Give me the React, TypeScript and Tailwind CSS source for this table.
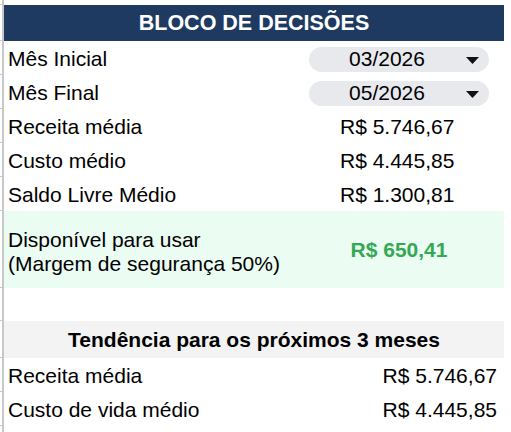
import React from "react";

type Linha = { rotulo: string; valor: string };

const resumo: Linha[] = [
  { rotulo: "Receita média", valor: "R$ 5.746,67" },
  { rotulo: "Custo médio", valor: "R$ 4.445,85" },
  { rotulo: "Saldo Livre Médio", valor: "R$ 1.300,81" },
];

const tendencia: Linha[] = [
  { rotulo: "Receita média", valor: "R$ 5.746,67" },
  { rotulo: "Custo de vida médio", valor: "R$ 4.445,85" },
];

// pequena "régua" de planilha do lado esquerdo
function Linha({ h, children, className = "" }: { h: string; children?: React.ReactNode; className?: string }) {
  return (
    <div className={`flex ${h}`}>
      <div className="w-[2px] border-b border-[#c8c8c8]" />
      <div className="w-[2px] bg-[#c8c8c8]" />
      <div className={`w-[500px] flex items-center ${className}`}>{children}</div>
    </div>
  );
}

function Seletor({ valor }: { valor: string }) {
  return (
    <div className="ml-auto mr-[15px] w-[180px] h-[25px] rounded-full bg-[#e8e9ed] flex items-center relative">
      <span className="w-full text-center pr-[24px]">{valor}</span>
      <svg className="absolute right-[10px] top-[10px]" width="13" height="7" viewBox="0 0 13 7">
        <path d="M0 0 L13 0 L6.5 7 Z" fill="#111" />
      </svg>
    </div>
  );
}

export default function App() {
  return (
    <div
      className="w-[511px] h-[432px] bg-white text-black text-[21px] overflow-hidden"
      style={{ fontFamily: '"Liberation Sans", Arial, sans-serif' }}
    >
      <Linha h="h-[5px]" />
      <Linha h="h-[36px]" className="bg-[#1e3a61] justify-center">
        <span className="text-white font-bold text-[21.5px]">BLOCO DE DECISÕES</span>
      </Linha>
      <Linha h="h-[34px]" className="pl-[4px] pt-[2px]">
        <span>Mês Inicial</span>
        <Seletor valor="03/2026" />
      </Linha>
      <Linha h="h-[34px]" className="pl-[4px] pt-[2px]">
        <span>Mês Final</span>
        <Seletor valor="05/2026" />
      </Linha>
      {resumo.map((l) => (
        <Linha key={l.rotulo} h="h-[34px]" className="pl-[4px] pt-[2px]">
          <span className="w-[332px]">{l.rotulo}</span>
          <span>{l.valor}</span>
        </Linha>
      ))}
      <Linha h="h-[77px]" className="bg-[#ebfcf3] pl-[4px]">
        <div className="w-[300px] leading-[24px] pt-[4px]">
          Disponível para usar
          <br />
          (Margem de segurança 50%)
        </div>
        <div className="flex-1 text-center font-bold text-[#34a853] pr-[14px]">R$ 650,41</div>
      </Linha>
      <Linha h="h-[33px]" />
      <Linha h="h-[37px]" className="bg-[#f3f3f3] justify-center">
        <span className="font-bold">Tendência para os próximos 3 meses</span>
      </Linha>
      {tendencia.map((l) => (
        <Linha key={l.rotulo} h="h-[34px]" className="pl-[4px] pr-[7px] pt-[2px] justify-between">
          <span>{l.rotulo}</span>
          <span>{l.valor}</span>
        </Linha>
      ))}
      <Linha h="h-[40px]" />
    </div>
  );
}
